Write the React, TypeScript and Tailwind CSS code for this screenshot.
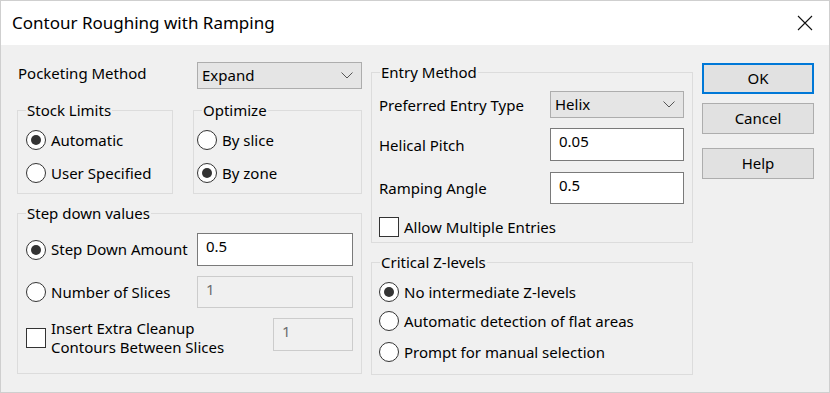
import React from "react";

const font = { fontFamily: '"Segoe UI", "Noto Sans", "Liberation Sans", sans-serif' };

function Radio({ checked, label }: { checked?: boolean; label: string }) {
  return (
    <div className="flex h-[20px] items-center">
      <svg width="20" height="20" viewBox="0 0 20 20" className="shrink-0">
        <circle cx="10" cy="10" r="9.5" fill="#fff" stroke="#333" />
        {checked && <circle cx="10" cy="10" r="5" fill="#333" />}
      </svg>
      <span className="ml-[5px] whitespace-nowrap">{label}</span>
    </div>
  );
}

function Check({ children }: { children: React.ReactNode }) {
  return (
    <div className="flex items-center">
      <div className="h-[20px] w-[20px] shrink-0 border border-[#333] bg-white" />
      <div className="ml-[5px] leading-[19px]">{children}</div>
    </div>
  );
}

function Combo({ value, width }: { value: string; width: string }) {
  return (
    <div className={`flex h-[27px] ${width} items-center justify-between border border-[#adadad] bg-[#e5e5e5] pl-[4px] pr-[8px]`}>
      <span>{value}</span>
      <svg width="12" height="7" viewBox="0 0 12 7">
        <path d="M0.5 0.5 L6 6 L11.5 0.5" fill="none" stroke="#555" strokeWidth="1" />
      </svg>
    </div>
  );
}

function Field({ value, disabled, width, height = "h-[33px]" }: { value: string; disabled?: boolean; width: string; height?: string }) {
  return (
    <div
      className={`${width} ${height} px-[8px] leading-[24px] ${
        disabled ? "border border-[#cccccc] bg-[#f0f0f0] text-[#6d6d6d]" : "border border-[#7a7a7a] bg-white"
      }`}
    >
      {value}
    </div>
  );
}

function Group({ title, className, children }: { title: string; className: string; children: React.ReactNode }) {
  return (
    <fieldset className={`border border-[#dcdcdc] ${className}`}>
      <legend className="ml-[8px] px-[1px] leading-[20px]">{title}</legend>
      {children}
    </fieldset>
  );
}

function Button({ label, primary, className = "" }: { label: string; primary?: boolean; className?: string }) {
  return (
    <div
      className={`flex h-[31px] w-[112px] items-center justify-center bg-[#e1e1e1] ${
        primary ? "border-2 border-[#0078d7]" : "border border-[#adadad]"
      } ${className}`}
    >
      {label}
    </div>
  );
}

export default function App() {
  return (
    <div style={font} className="flex h-[393px] w-[830px] flex-col border border-[#cfcfcf] text-[15px] text-black">
      <div className="flex h-[44px] shrink-0 items-center justify-between bg-white pl-[11px] pr-[16px]">
        <span className="text-[17px]">Contour Roughing with Ramping</span>
        <svg width="16" height="16" viewBox="0 0 16 16">
          <path d="M1 1 L15 15 M15 1 L1 15" stroke="#111" strokeWidth="1.1" />
        </svg>
      </div>
      <div className="flex flex-1 bg-[#f0f0f0] pl-[16px] pt-[17px]">
        {/* left column */}
        <div className="flex w-[345px] flex-col">
          <div className="flex h-[27px] items-center justify-between">
            <span className="ml-[1px] -mt-[4px]">Pocketing Method</span>
            <Combo value="Expand" width="w-[165px]" />
          </div>
          <div className="mt-[11px] flex gap-[20px]">
            <Group title="Stock Limits" className="h-[94px] w-[156px]">
              <div className="flex flex-col gap-[13px] pl-[8px] pt-[10px]">
                <Radio checked label="Automatic" />
                <Radio label="User Specified" />
              </div>
            </Group>
            <Group title="Optimize" className="h-[94px] w-[169px]">
              <div className="flex flex-col gap-[13px] pl-[3px] pt-[10px]">
                <Radio label="By slice" />
                <Radio checked label="By zone" />
              </div>
            </Group>
          </div>
          <Group title="Step down values" className="mt-[9px] h-[171px] w-[345px]">
            <div className="flex flex-col pl-[8px] pr-[8px] pt-[10px]">
              <div className="flex items-center justify-between">
                <Radio checked label="Step Down Amount" />
                <Field value="0.5" width="w-[156px]" />
              </div>
              <div className="mt-[10px] flex items-center justify-between">
                <Radio label="Number of Slices" />
                <Field value="1" disabled width="w-[156px]" height="h-[32px]" />
              </div>
              <div className="mt-[10px] flex items-start justify-between">
                <div className="mt-[1px]">
                  <Check>
                    Insert Extra Cleanup
                    <br />
                    Contours Between Slices
                  </Check>
                </div>
                <Field value="1" disabled width="w-[80px]" />
              </div>
            </div>
          </Group>
        </div>

        {/* middle column */}
        <div className="ml-[9px] flex w-[322px] flex-col">
          <Group title="Entry Method" className="h-[181px] w-[322px]">
            <div className="flex flex-col pl-[7px] pr-[8px] pt-[9px]">
              <div className="flex h-[26px] items-center justify-between">
                <span className="mt-[3px]">Preferred Entry Type</span>
                <Combo value="Helix" width="w-[134px]" />
              </div>
              <div className="mt-[11px] flex items-center justify-between">
                <span className="mt-[1px]">Helical Pitch</span>
                <Field value="0.05" width="w-[134px]" />
              </div>
              <div className="mt-[11px] flex items-center justify-between">
                <span>Ramping Angle</span>
                <Field value="0.5" width="w-[134px]" height="h-[32px]" />
              </div>
              <div className="mt-[13px]">
                <Check>Allow Multiple Entries</Check>
              </div>
            </div>
          </Group>
          <Group title="Critical Z-levels" className="mt-[9px] h-[123px] w-[322px]">
            <div className="flex flex-col pl-[7px] pt-[10px]">
              <Radio checked label="No intermediate Z-levels" />
              <div className="mt-[9px]">
                <Radio label="Automatic detection of flat areas" />
              </div>
              <div className="mt-[11px]">
                <Radio label="Prompt for manual selection" />
              </div>
            </div>
          </Group>
        </div>

        {/* buttons */}
        <div className="ml-[9px] mt-[1px] flex flex-col">
          <Button primary label="OK" />
          <Button label="Cancel" className="mt-[9px]" />
          <Button label="Help" className="mt-[14px]" />
        </div>
      </div>
    </div>
  );
}
